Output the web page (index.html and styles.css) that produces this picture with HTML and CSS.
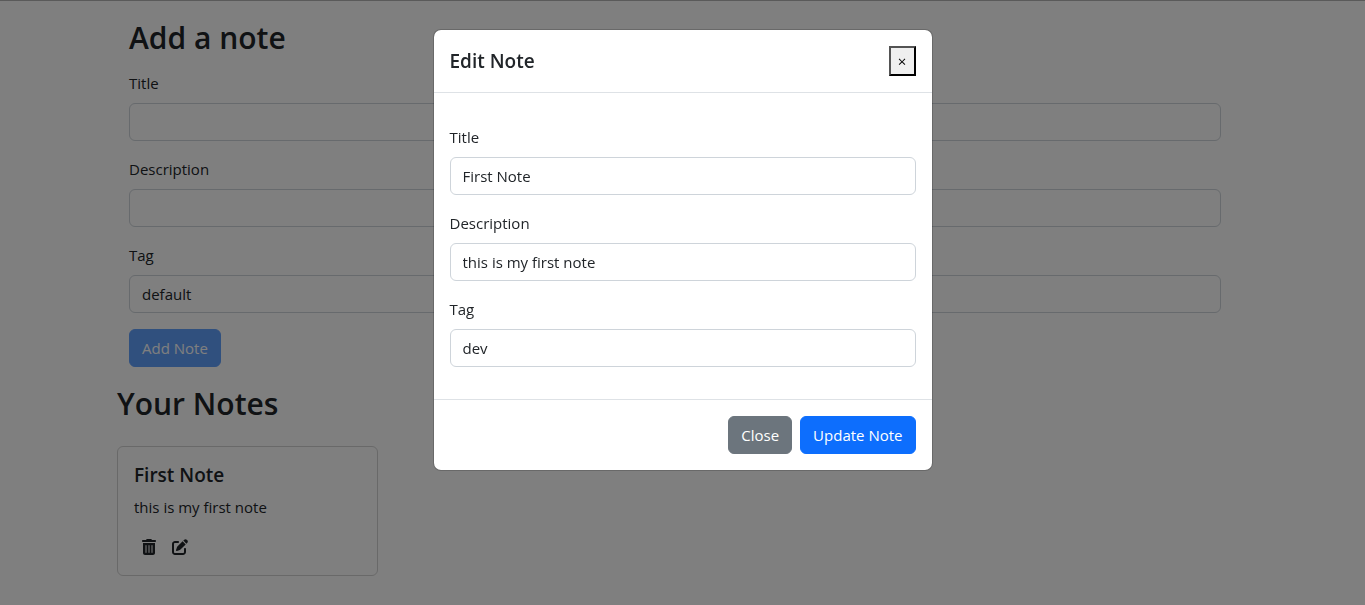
FILE: index.html
```html
<!DOCTYPE html>
<html lang="en">
<head>
<meta charset="utf-8">
<meta name="viewport" content="width=device-width, initial-scale=1">
<title>Notes</title>
<link rel="stylesheet" href="styles.css">
</head>
<body>
<main class="page">
  <section class="add-note">
    <h2 class="heading">Add a note</h2>
    <form class="form">
      <div class="field">
        <label class="label" for="title">Title</label>
        <input class="control" id="title" type="text">
      </div>
      <div class="field">
        <label class="label" for="description">Description</label>
        <input class="control" id="description" type="text">
      </div>
      <div class="field">
        <label class="label" for="tag">Tag</label>
        <input class="control" id="tag" type="text" value="default">
      </div>
      <button class="btn btn-primary" type="submit" disabled>Add Note</button>
    </form>
  </section>
  <section class="notes">
    <h2 class="heading">Your Notes</h2>
    <div class="note-grid">
      <article class="card">
        <h5 class="card-title">First Note</h5>
        <p class="card-text">this is my first note</p>
        <div class="card-actions">
          <button class="icon-btn" type="button" aria-label="Delete note">
            <svg class="icon-trash" viewBox="0 0 448 512" aria-hidden="true"><path d="M135.200 17.700L128 32H32C14.300 32 0 46.300 0 64s14.300 32 32 32h384c17.700 0 32-14.300 32-32s-14.300-32-32-32h-96l-7.200-14.300C307.400 6.800 296.300 0 284.200 0H163.800c-12.100 0-23.200 6.800-28.600 17.700zM416 128H32v320c0 35.300 28.700 64 64 64h256c35.300 0 64-28.700 64-64V128zM144 208v224c0 8.800-7.200 16-16 16s-16-7.200-16-16V208c0-8.800 7.200-16 16-16s16 7.200 16 16zm96 0v224c0 8.800-7.200 16-16 16s-16-7.200-16-16V208c0-8.800 7.200-16 16-16s16 7.200 16 16zm96 0v224c0 8.800-7.200 16-16 16s-16-7.200-16-16V208c0-8.800 7.200-16 16-16s16 7.200 16 16z"/></svg>
          </button>
          <button class="icon-btn" type="button" aria-label="Edit note">
            <svg class="icon-edit" viewBox="0 0 512 512" aria-hidden="true"><path d="M471.600 21.700c-21.900-21.900-57.300-21.900-79.200 0L362.300 51.700l97.900 97.900 30.100-30.100c21.900-21.900 21.900-57.300 0-79.200L471.600 21.700zm-299.200 220c-6.100 6.100-10.800 13.600-13.500 21.900l-29.600 88.800c-2.900 8.600-.6 18.100 5.800 24.600s15.900 8.700 24.600 5.800l88.800-29.600c8.200-2.700 15.700-7.400 21.900-13.500L437.700 172.300 339.700 74.300 172.400 241.700zM96 64c-53 0-96 43-96 96v256c0 53 43 96 96 96h256c53 0 96-43 96-96v-96c0-17.700-14.300-32-32-32s-32 14.300-32 32v96c0 17.700-14.300 32-32 32H96c-17.700 0-32-14.300-32-32V160c0-17.700 14.300-32 32-32h96c17.700 0 32-14.300 32-32s-14.300-32-32-32H96z"/></svg>
          </button>
        </div>
      </article>
    </div>
  </section>
</main>

<div class="modal-layer">
  <div class="modal" role="dialog" aria-modal="true" aria-labelledby="modal-title">
    <header class="modal-header">
      <h5 class="modal-title" id="modal-title">Edit Note</h5>
      <button class="dismiss" type="button" aria-label="Dismiss">×</button>
    </header>
    <form class="modal-body" id="edit-form">
      <div class="field">
        <label class="label" for="edit-title">Title</label>
        <input class="control" id="edit-title" type="text" value="First Note">
      </div>
      <div class="field">
        <label class="label" for="edit-description">Description</label>
        <input class="control" id="edit-description" type="text" value="this is my first note">
      </div>
      <div class="field">
        <label class="label" for="edit-tag">Tag</label>
        <input class="control" id="edit-tag" type="text" value="dev">
      </div>
    </form>
    <footer class="modal-footer">
      <button class="btn btn-secondary" type="button">Close</button>
      <button class="btn btn-primary" type="submit" form="edit-form">Update Note</button>
    </footer>
  </div>
</div>
</body>
</html>
```
FILE: styles.css
```css
*, *::before, *::after {
  box-sizing: border-box;
}

body {
  margin: 0;
  padding-right: 15px;
  border-top: 1px solid #b4b4b4;
  background: #fff;
  color: #212529;
  font-family: "Segoe UI", "Open Sans", "Noto Sans", sans-serif;
  font-size: 15px;
  line-height: 24px;
}

h2, h5, p {
  margin: 0;
}

.page {
  max-width: 1140px;
  margin: 0 auto;
  padding: 16px 12px 24px;
}

.add-note {
  padding: 0 12px;
}

.heading {
  margin-bottom: 12px;
  font-size: 30px;
  font-weight: 600;
  line-height: 42px;
}

.field {
  margin-bottom: 16px;
}

.label {
  display: block;
  margin-bottom: 8px;
}

.control {
  display: block;
  width: 100%;
  height: 38px;
  padding: 6px 12px;
  border: 1px solid #ced4da;
  border-radius: 6px;
  background: #fff;
  color: inherit;
  font: inherit;
}

.btn {
  height: 38px;
  padding: 6px 12px;
  border: 1px solid transparent;
  border-radius: 6px;
  color: #fff;
  font: inherit;
}

.btn-primary {
  border-color: #0d6efd;
  background: #0d6efd;
}

.btn-secondary {
  border-color: #6c757d;
  background: #6c757d;
}

.btn:disabled {
  opacity: 0.65;
}

.notes {
  padding-top: 16px;
}

.notes .heading {
  margin-bottom: 21px;
}

.note-grid {
  display: grid;
  grid-template-columns: repeat(4, 1fr);
  gap: 24px;
}

.card {
  padding: 16px;
  border: 1px solid #d2d2d2;
  border-radius: 6px;
}

.card-title {
  margin-bottom: 8px;
  font-size: 19px;
  font-weight: 600;
  line-height: 24px;
}

.card-text {
  margin-bottom: 16px;
}

.card-actions {
  display: flex;
  align-items: center;
  gap: 16px;
  height: 24px;
  padding-left: 8px;
}

.icon-btn {
  display: flex;
  padding: 0;
  border: 0;
  background: none;
  color: inherit;
}

.icon-btn svg {
  height: 16px;
  fill: currentColor;
}

.icon-trash {
  width: 14px;
}

.icon-edit {
  width: 16px;
}

.modal-layer {
  position: fixed;
  inset: 0;
  padding: 29px 8px;
  overflow: auto;
  background: rgba(0, 0, 0, 0.5);
}

.modal {
  max-width: 500px;
  margin: 0 auto;
  border: 1px solid rgba(0, 0, 0, 0.175);
  border-radius: 8px;
  background: #fff;
  background-clip: padding-box;
}

.modal-header {
  display: flex;
  align-items: center;
  justify-content: space-between;
  padding: 16px;
  border-bottom: 1px solid #dee2e6;
}

.modal-title {
  font-size: 19px;
  font-weight: 600;
  line-height: 30px;
}

.dismiss {
  width: 27px;
  height: 30px;
  padding: 0;
  border: 2px outset #000;
  background: #efefef;
  color: #000;
  font: inherit;
}

.modal-body {
  padding: 32px 16px 16px;
}

.modal-footer {
  display: flex;
  justify-content: flex-end;
  gap: 8px;
  padding: 16px;
  border-top: 1px solid #dee2e6;
}
```
